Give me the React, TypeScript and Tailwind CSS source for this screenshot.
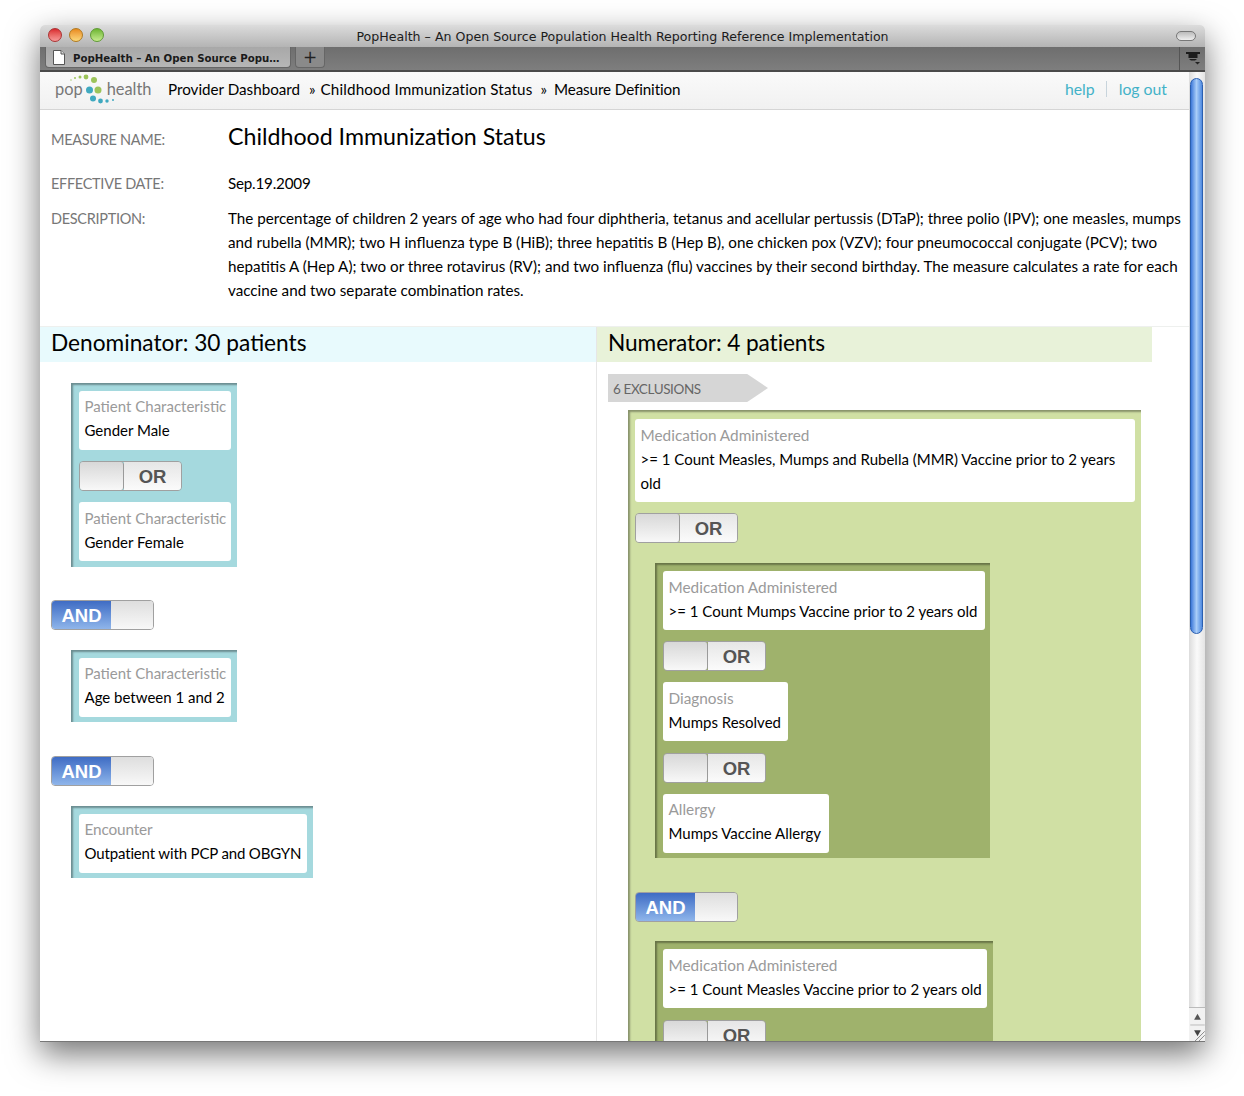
import React from "react";

const Toggle = ({ kind }: { kind: "OR" | "AND" }) => (
  <div className="flex h-[30px] w-[103px] shrink-0 overflow-hidden rounded-[4px] border border-[#a0a0a0] font-['Liberation_Sans',sans-serif] text-[18.5px] font-bold">
    {kind === "AND" ? (
      <>
        <div className="flex w-[59px] items-center justify-center bg-gradient-to-b from-[#3f6cc4] to-[#8fb5ea] pt-[1px] text-white">AND</div>
        <div className="flex-1 bg-gradient-to-b from-[#dedede] to-[#f8f8f8]" />
      </>
    ) : (
      <>
        <div className="w-[44px] rounded-r-[3px] border-r border-[#9a9a9a] bg-gradient-to-b from-[#d8d8d8] to-[#f8f8f8]" />
        <div className="flex flex-1 items-center justify-center bg-gradient-to-b from-[#e6e6e6] to-[#fbfbfb] pt-[1px] text-[#555]">OR</div>
      </>
    )}
  </div>
);

const Card = ({ title, children, className = "", up = false }: { title: string; children: React.ReactNode; className?: string; up?: boolean }) => (
  <div className={`rounded-[3px] bg-white pl-[5.5px] text-[15px] leading-[24px] ${up ? "pb-[8px] pt-[3px]" : "pb-[7px] pt-[4px]"} ${className}`}>
    <div className={`whitespace-nowrap text-[#9a9a9a] ${title.startsWith("Patient") ? "" : "text-[15.35px]"}`}>{title}</div>
    <div className="text-black">{children}</div>
  </div>
);

const Box = ({ bg, children, className = "" }: { bg: string; children: React.ReactNode; className?: string }) => (
  <div className={`flex flex-col items-start shadow-[inset_3px_3px_2px_-1px_rgba(0,0,0,0.35)] ${bg} ${className}`}>{children}</div>
);

const Dots = () => (
  <svg width="60" height="32" viewBox="0 0 60 32" className="absolute left-[14px] top-[2px]">
    <circle cx="17" cy="6" r="0.7" fill="#9cc45a" />
    <circle cx="21" cy="4" r="1" fill="#9cc45a" />
    <circle cx="26" cy="3" r="1.5" fill="#9cc45a" />
    <circle cx="32" cy="3" r="2.4" fill="#9cc45a" />
    <circle cx="40" cy="6" r="3" fill="#9cc45a" />
    <circle cx="35.5" cy="16" r="3.5" fill="#3fa9c0" />
    <circle cx="44" cy="16" r="3.5" fill="#9cc45a" />
    <circle cx="39" cy="24.5" r="3" fill="#3fa9c0" />
    <circle cx="46.5" cy="27" r="2.4" fill="#3fa9c0" />
    <circle cx="53" cy="27" r="1.7" fill="#3fa9c0" />
    <circle cx="59" cy="26" r="1" fill="#3fa9c0" />
  </svg>
);

export default function App() {
  return (
    <div className="h-[1096px] w-[1244px] overflow-hidden bg-white pl-[40px] pt-[25px] font-['Lato',sans-serif]">
      <div className="flex h-[1017px] w-[1165px] flex-col overflow-hidden rounded-t-[5px] border-b border-[#777] bg-white shadow-[0_12px_32px_rgba(0,0,0,0.55)]">
        {/* title bar */}
        <div className="relative flex h-[22px] shrink-0 items-center justify-center bg-gradient-to-b from-[#dcdcdc] to-[#b4b4b4] pt-[2px] font-['DejaVu_Sans',sans-serif] text-[12.6px] text-[#1c1c1c]">
          <div className="absolute left-[8px] top-[3px] flex gap-[7px]">
            <span className="h-[14px] w-[14px] rounded-full border border-[#a33] bg-gradient-to-b from-[#d9252f] to-[#f79a9a]" />
            <span className="h-[14px] w-[14px] rounded-full border border-[#b07a20] bg-gradient-to-b from-[#e88a1a] to-[#fbd97a]" />
            <span className="h-[14px] w-[14px] rounded-full border border-[#5f9a35] bg-gradient-to-b from-[#6db52f] to-[#c7ec8e]" />
          </div>
          PopHealth – An Open Source Population Health Reporting Reference Implementation
          <div className="absolute right-[9px] top-[6px] h-[10px] w-[20px] rounded-full border border-[#777] bg-gradient-to-b from-[#bbb] to-[#eee]" />
        </div>
        {/* tab bar */}
        <div className="flex h-[25px] shrink-0 border-b-2 border-[#4a4a4a] bg-gradient-to-b from-[#6e6e6e] to-[#7e7e7e] pl-[5px] font-['DejaVu_Sans',sans-serif]">
          <div className="flex h-[21px] w-[246px] items-center gap-[8px] rounded-b-[4px] border border-t-0 border-[#666] bg-gradient-to-b from-[#a8a8a8] to-[#b6b6b6] pl-[7px] text-[10.2px] font-bold text-[#1a1a1a]">
            <svg width="12" height="15" viewBox="0 0 12 15" className="shrink-0">
              <path d="M0.5 0.5H8L11.5 4V14.5H0.5Z" fill="#fff" stroke="#555" />
              <path d="M8 0.5V4H11.5" fill="#ddd" stroke="#555" />
            </svg>
            <span className="whitespace-nowrap pt-[3px]">PopHealth – An Open Source Popu…</span>
          </div>
          <div className="ml-[4px] flex h-[21px] w-[30px] items-center justify-center rounded-b-[4px] border border-t-0 border-[#666] bg-[#8a8a8a] text-[17px] leading-none text-[#222]">+</div>
          <div className="ml-auto flex w-[26px] items-start justify-center border-l border-[#555] pt-[4px]">
            <svg width="16" height="14" viewBox="0 0 16 14">
              <path d="M1 1H15V3H12.5V7H3.5V3H1Z" fill="#1c1c1c" />
              <path d="M4 8H12L10 9.5H6Z" fill="#1c1c1c" />
              <path d="M10 11H15L12.5 13.5Z" fill="#222" />
            </svg>
          </div>
        </div>

        <div className="flex min-h-0 flex-1">
          <div className="flex min-w-0 flex-1 flex-col overflow-hidden">
            {/* nav */}
            <div className="relative flex h-[38px] shrink-0 items-center border-b border-[#d5d5d5] bg-gradient-to-b from-[#fafafa] to-[#f1f1f1] pb-[3px] text-[15.2px] text-black">
              <Dots />
              <span className="ml-[15px] w-[113px] text-[16.4px] text-[#777]">
                pop<span className="ml-[24px]">health</span>
              </span>
              <span>Provider Dashboard</span>
              <span className="ml-[9px]">»</span>
              <span className="ml-[5px] tracking-[0.14px]">Childhood Immunization Status</span>
              <span className="ml-[8px]">»</span>
              <span className="ml-[7px] tracking-[-0.1px]">Measure Definition</span>
              <div className="ml-auto mr-[22px] flex items-center text-[15.8px] text-[#43b2c8]">
                help
                <span className="ml-[11px] mr-[12px] h-[16px] w-px bg-[#c8d4dc]" />
                log out
              </div>
            </div>
            {/* definition */}
            <div className="shrink-0 pl-[11px] pr-[4px] pt-[11px] text-[15.2px]">
              <div className="flex h-[30px] items-start">
                <div className="w-[177px] pt-[7px] text-[14.5px] leading-[24px] tracking-[-0.3px] text-[#777]">MEASURE NAME:</div>
                <div className="text-[23.2px] leading-[30px] text-black">Childhood Immunization Status</div>
              </div>
              <div className="mt-[21px] flex h-[24px] leading-[24px]">
                <div className="w-[177px] text-[14.5px] tracking-[-0.3px] text-[#777]">EFFECTIVE DATE:</div>
                <div className="-mt-[1px] tracking-[-0.2px] text-black">Sep.19.2009</div>
              </div>
              <div className="mt-[11px] flex leading-[24px]">
                <div className="w-[177px] shrink-0 text-[14.5px] tracking-[-0.3px] text-[#777]">DESCRIPTION:</div>
                <div className="-mt-[1px] text-black">
                  The percentage of children 2 years of age who had four diphtheria, tetanus and acellular pertussis (DTaP); three polio (IPV); one measles, mumps and rubella (MMR); two H influenza type B (HiB); three hepatitis B (Hep B), one chicken pox (VZV); four pneumococcal conjugate (PCV); two hepatitis A (Hep A); two or three rotavirus (RV); and two influenza (flu) vaccines by their second birthday. The measure calculates a rate for each vaccine and two separate combination rates.
                </div>
              </div>
            </div>
            {/* columns */}
            <div className="mt-[24px] flex min-h-0 flex-1 border-t border-[#eef0ee]">
              <div className="w-[557px] shrink-0 border-r border-[#e6e6e6]">
                <div className="flex h-[35px] items-center bg-[#e8fafd] pb-[3px] pl-[11px] text-[22.7px] text-black">Denominator: 30 patients</div>
                <div className="flex flex-col items-start pl-[11px] pt-[21px]">
                  <Box bg="bg-[#a5d9de]" className="ml-[20px] pb-[6px] pl-[8px] pr-[6px] pt-[8px]">
                    <Card up title="Patient Characteristic" className="w-[152px]">Gender Male</Card>
                    <div className="my-[11px]"><Toggle kind="OR" /></div>
                    <Card title="Patient Characteristic" className="w-[152px]">Gender Female</Card>
                  </Box>
                  <div className="mt-[33px]"><Toggle kind="AND" /></div>
                  <Box bg="bg-[#a5d9de]" className="ml-[20px] mt-[20px] pb-[5px] pl-[8px] pr-[6px] pt-[8px]">
                    <Card up title="Patient Characteristic" className="w-[152px] whitespace-nowrap">Age between 1 and 2</Card>
                  </Box>
                  <div className="mt-[34px]"><Toggle kind="AND" /></div>
                  <Box bg="bg-[#a5d9de]" className="ml-[20px] mt-[20px] pb-[5px] pl-[8px] pr-[6px] pt-[8px]">
                    <Card up title="Encounter" className="w-[228px] whitespace-nowrap tracking-[-0.15px]">Outpatient with PCP and OBGYN</Card>
                  </Box>
                </div>
              </div>
              <div className="min-w-0 flex-1">
                <div className="flex h-[35px] w-[555px] items-center bg-[#e8f2d9] pb-[3px] pl-[11px] text-[22.7px] tracking-[-0.1px] text-black">Numerator: 4 patients</div>
                <div className="flex flex-col items-start pl-[11px] pt-[12px]">
                  <div className="flex h-[28px] w-[160px] items-center bg-[#d6d6d6] pl-[5px] pt-[2px] text-[13.5px] tracking-[-0.4px] text-[#666] [clip-path:polygon(0_0,87%_0,100%_50%,87%_100%,0_100%)]">6 EXCLUSIONS</div>
                  <Box bg="bg-[#d0e0a4]" className="ml-[20px] mt-[8px] w-[513px] pl-[7px] pr-[6px] pt-[9px]">
                    <Card title="Medication Administered" className="w-[500px]">
                      &gt;= 1 Count Measles, Mumps and Rubella (MMR) Vaccine prior to 2 years old
                    </Card>
                    <div className="mt-[11px]"><Toggle kind="OR" /></div>
                    <Box bg="bg-[#9fb26c]" className="ml-[20px] mt-[20px] pb-[5px] pl-[8px] pr-[5px] pt-[8px]">
                      <Card title="Medication Administered" className="w-[322px] whitespace-nowrap">&gt;= 1 Count Mumps Vaccine prior to 2 years old</Card>
                      <div className="my-[11px]"><Toggle kind="OR" /></div>
                      <Card title="Diagnosis" className="w-[125px] whitespace-nowrap">Mumps Resolved</Card>
                      <div className="mb-[11px] mt-[12px]"><Toggle kind="OR" /></div>
                      <Card up title="Allergy" className="w-[166px] whitespace-nowrap">Mumps Vaccine Allergy</Card>
                    </Box>
                    <div className="mt-[34px]"><Toggle kind="AND" /></div>
                    <Box bg="bg-[#9fb26c]" className="ml-[20px] mt-[19px] pb-[5px] pl-[8px] pr-[6px] pt-[8px]">
                      <Card title="Medication Administered" className="w-[324px] whitespace-nowrap">&gt;= 1 Count Measles Vaccine prior to 2 years old</Card>
                      <div className="mt-[12px]"><Toggle kind="OR" /></div>
                    </Box>
                  </Box>
                </div>
              </div>
            </div>
          </div>
          {/* scrollbar */}
          <div className="flex w-[16px] shrink-0 flex-col bg-gradient-to-r from-[#dcdcdc] via-[#fafafa] to-[#e4e4e4]">
            <div className="ml-[1px] mt-[6px] h-[556px] w-[13px] rounded-full border border-[#2a5fb0] bg-gradient-to-r from-[#3d78d8] via-[#a9cdf8] to-[#4f8ae0]" />
            <div className="mt-auto flex h-[34px] flex-col items-center border-t border-[#bbb] bg-[#f2f2f2] text-[#555]">
              <svg width="15" height="34" viewBox="0 0 15 34">
                <path d="M7.5 6L11 12H4Z" fill="#555" />
                <path d="M0 17.5H15" stroke="#bbb" />
                <path d="M4 23H11L7.5 29Z" fill="#444" />
                <path d="M15 24L5 34M15 28L9 34" stroke="#888" />
              </svg>
            </div>
          </div>
        </div>
      </div>
    </div>
  );
}
